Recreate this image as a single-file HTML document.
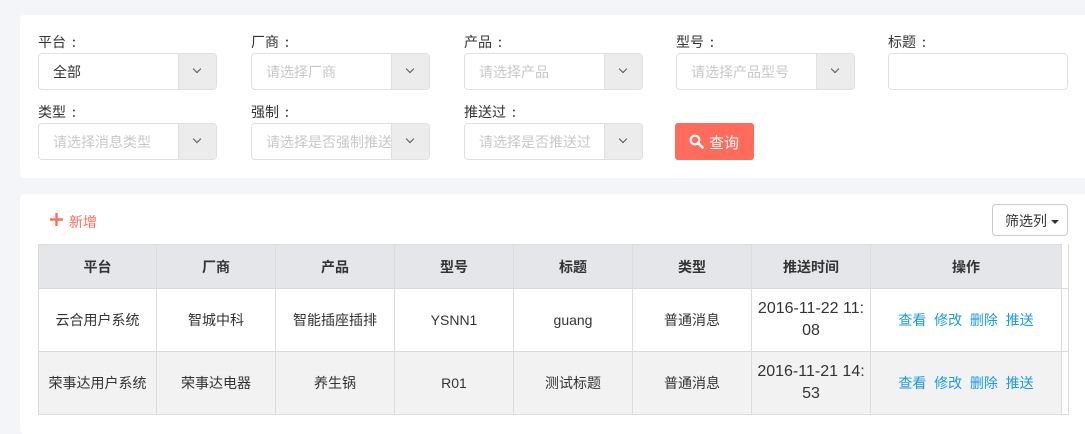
<!DOCTYPE html>
<html><head><meta charset="utf-8"><style>
*{box-sizing:border-box;margin:0;padding:0}
body{width:1085px;height:415px;overflow:hidden;background:#f3f5f8;font-family:"Liberation Sans","Noto Sans CJK SC",sans-serif;font-size:14px;color:#333;position:relative}
.card{position:absolute;background:#fff;border-radius:4px}
.lab{position:absolute;font-size:14px;color:#333;font-family:"Noto Sans CJK SC",sans-serif;line-height:20px}
.lab b{font-weight:normal;margin-left:6px}
.sel{position:absolute;width:179px;height:37px;border:1px solid #e0e0e0;border-radius:4px;background:#fff;overflow:hidden}
.sel span{position:absolute;left:14px;top:8px;color:#c8c8c8;white-space:nowrap;font-size:14px}
.sel span.v{color:#333}
.sel i{position:absolute;right:0;top:0;width:38px;height:35px;background:#ececec;border-left:1px solid #e0e0e0}
.sel i:after{content:"";position:absolute;left:15px;top:12px;width:5px;height:5px;border-right:1.5px solid #555;border-bottom:1.5px solid #555;transform:rotate(45deg)}
table{position:absolute;left:38px;top:244px;border-collapse:collapse;font-size:14px}
td,th{border:1px solid #dcdcdc;text-align:center;line-height:24px}
th{background:#e4e6ea;height:44px;font-weight:bold;color:#333}
td{height:63px}
td.d{font-size:16px;line-height:22px}
tr.g td{background:#f2f2f2}
a{color:#1a9ae6;text-decoration:none}
</style></head><body>
<div class="card" style="left:20px;top:15px;width:1080px;height:163px"></div>
<div class="card" style="left:20px;top:194px;width:1080px;height:240px"></div>

<div class="lab" style="left:38px;top:32px">平台<b>:</b></div>
<div class="lab" style="left:251px;top:32px">厂商<b>:</b></div>
<div class="lab" style="left:464px;top:32px">产品<b>:</b></div>
<div class="lab" style="left:676px;top:32px">型号<b>:</b></div>
<div class="lab" style="left:888px;top:32px">标题<b>:</b></div>
<div class="sel" style="left:38px;top:53px"><span class="v">全部</span><i></i></div>
<div class="sel" style="left:251px;top:53px"><span>请选择厂商</span><i></i></div>
<div class="sel" style="left:464px;top:53px"><span>请选择产品</span><i></i></div>
<div class="sel" style="left:676px;top:53px"><span>请选择产品型号</span><i></i></div>
<div class="sel" style="left:888px;top:53px;width:180px"></div>

<div class="lab" style="left:38px;top:102px">类型<b>:</b></div>
<div class="lab" style="left:251px;top:102px">强制<b>:</b></div>
<div class="lab" style="left:464px;top:102px">推送过<b>:</b></div>
<div class="sel" style="left:38px;top:123px"><span>请选择消息类型</span><i></i></div>
<div class="sel" style="left:251px;top:123px"><span>请选择是否强制推送</span><i></i></div>
<div class="sel" style="left:464px;top:123px"><span>请选择是否推送过</span><i></i></div>
<div style="position:absolute;left:675px;top:123px;width:79px;height:37px;background:#ff6c5c;border-radius:3px;color:#fff;font-size:15px">
<svg style="position:absolute;left:14px;top:11px" width="15" height="15" viewBox="0 0 15 15"><circle cx="6" cy="6" r="4.3" fill="none" stroke="#fff" stroke-width="2.2"/><path d="M9 9l4.5 4.5" stroke="#fff" stroke-width="2.6" stroke-linecap="round"/></svg>
<span style="position:absolute;left:34px;top:9px">查询</span></div>

<svg style="position:absolute;left:49px;top:212px" width="15" height="15" viewBox="0 0 15 15"><path d="M7.5 1v13M1 7.5h13" stroke="#ff6c5c" stroke-width="2.4"/></svg>
<div style="position:absolute;left:69px;top:212px;color:#ff6c5c;font-size:14px">新增</div>
<div style="position:absolute;left:992px;top:204px;width:76px;height:32px;border:1px solid #ccc;border-radius:4px;background:#fff;font-size:14px;padding:6px 0 0 12px">筛选列 <span style="display:inline-block;border-left:4px solid transparent;border-right:4px solid transparent;border-top:4px solid #333;vertical-align:middle"></span></div>

<table>
<tr><th style="width:118px">平台</th><th style="width:119px">厂商</th><th style="width:119px">产品</th><th style="width:119px">型号</th><th style="width:119px">标题</th><th style="width:119px">类型</th><th style="width:119px">推送时间</th><th style="width:191px">操作</th><th style="width:7px;background:#fff;border-top-color:#fff"></th></tr>
<tr><td>云合用户系统</td><td>智城中科</td><td>智能插座插排</td><td>YSNN1</td><td>guang</td><td>普通消息</td><td class="d">2016-11-22 11:<br>08</td><td><a>查看</a>&nbsp; <a>修改</a>&nbsp; <a>删除</a>&nbsp; <a>推送</a></td><td style="background:#fff"></td></tr>
<tr class="g"><td>荣事达用户系统</td><td>荣事达电器</td><td>养生锅</td><td>R01</td><td>测试标题</td><td>普通消息</td><td class="d">2016-11-21 14:<br>53</td><td><a>查看</a>&nbsp; <a>修改</a>&nbsp; <a>删除</a>&nbsp; <a>推送</a></td><td style="background:#fff"></td></tr>
</table>
</body></html>
